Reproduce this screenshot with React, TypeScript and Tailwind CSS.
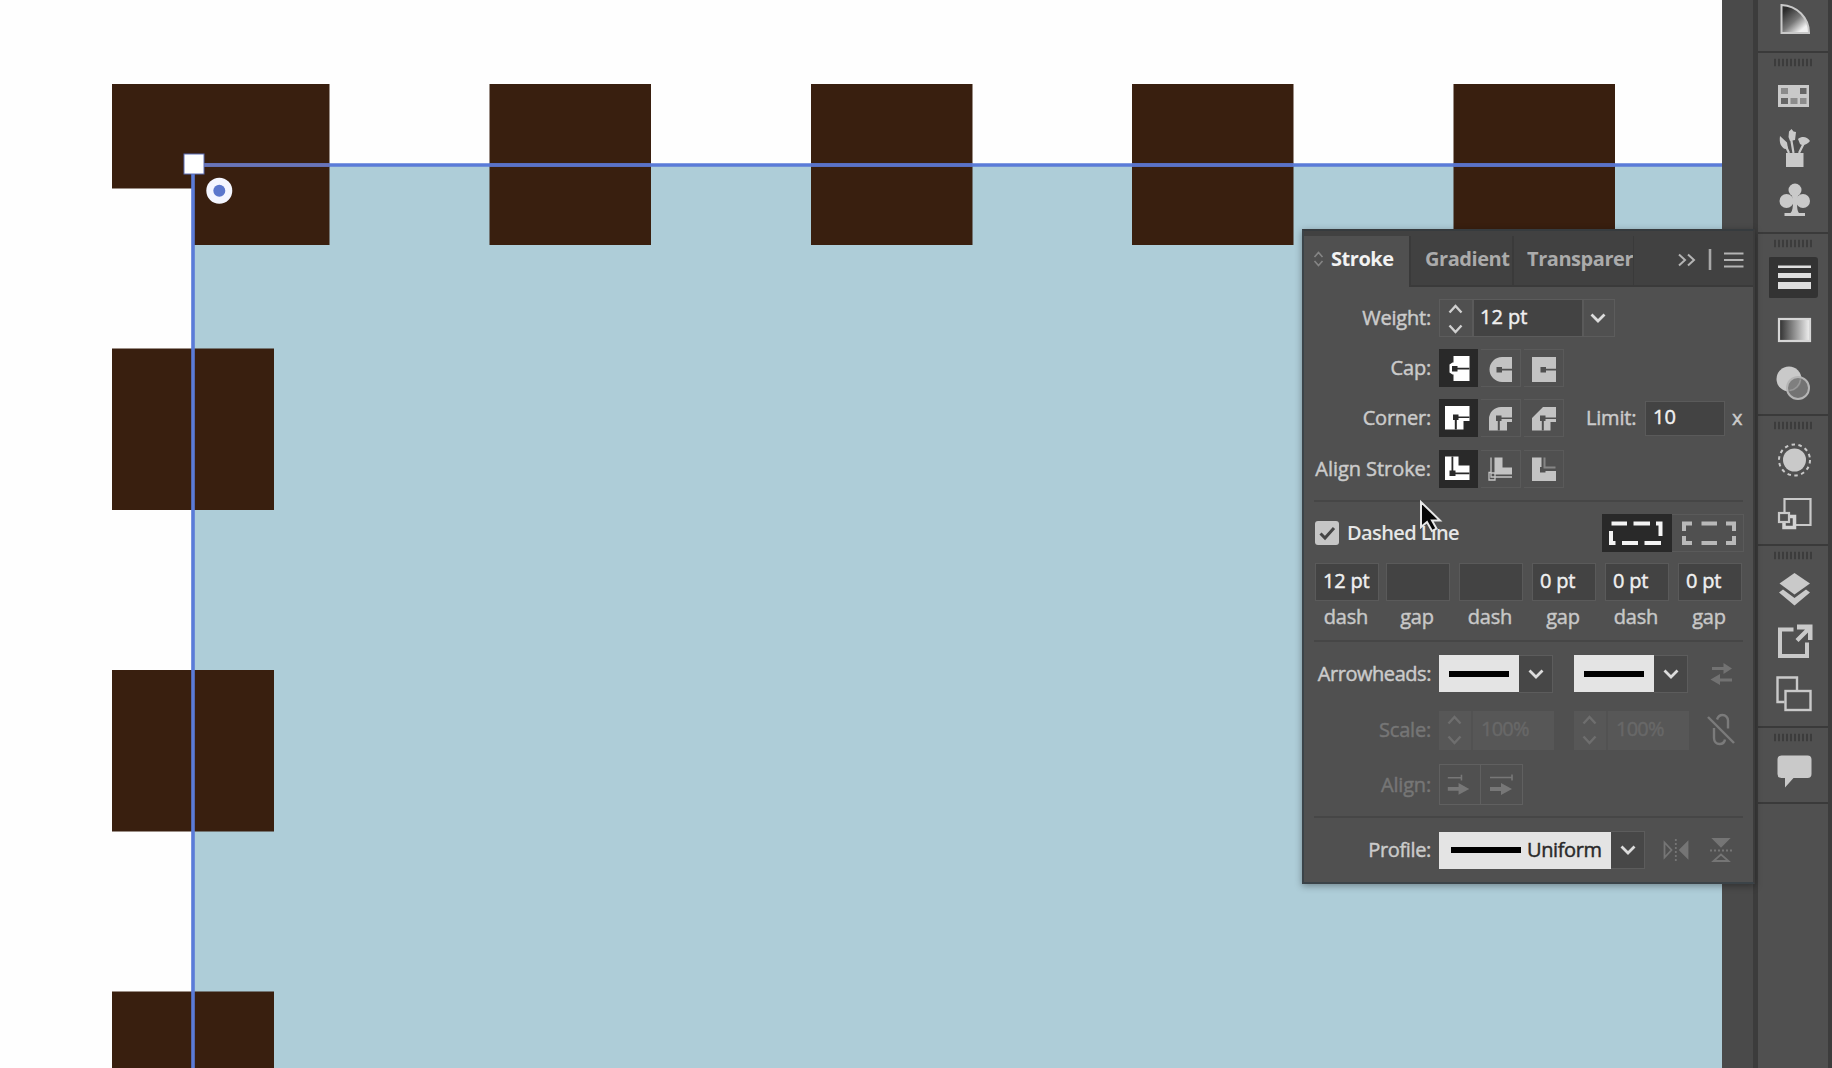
import type { ReactNode } from 'react'
import clsx from 'clsx'

const FONT = "font-['Open_Sans','Noto_Sans',sans-serif]"

function Artwork() {
  const top = [489.5, 811, 1132, 1453.5]
  const left = [348.5, 670, 991.5]
  return (
    <svg className="block h-[1068px] w-[1722px] shrink-0" viewBox="0 0 1722 1068">
      <rect width="1722" height="1068" fill="#fefefe" />
      <rect x="193" y="165" width="1529" height="903" fill="#aecdd8" />
      <g fill="#391f0f">
        <path d="M112 84H329.500V245H193V188.500H112Z" />
        {top.map((x) => (
          <rect key={x} x={x} y="84" width="161.5" height="161" />
        ))}
        {left.map((y) => (
          <rect key={y} x="112" y={y} width="162" height="161.5" />
        ))}
      </g>
      <path d="M1722 165H193V1068" fill="none" stroke="#5a7bd8" strokeWidth="3.6" />
      <g stroke="#6a74b8" strokeWidth="3.6">
        <path d="M194 165H329" />
        {top.map((x) => (
          <path key={x} d={`M${x} 165h161`} stroke="#5a72c8" />
        ))}
      </g>
      <rect x="184" y="154" width="20" height="20" fill="#fff" stroke="#5a6cb4" strokeWidth="1" />
      <circle cx="219.3" cy="190.7" r="13" fill="#f4f6ff" />
      <circle cx="219.3" cy="190.7" r="6" fill="#5b77cc" />
    </svg>
  )
}

/* ---------- small glyphs ---------- */

function Stepper({ color = '#d0d0d0' }: { color?: string }) {
  return (
    <svg className="h-[38px] w-8 shrink-0" viewBox="0 0 32 38" fill="none" stroke={color} strokeWidth="2.4">
      <path d="M9.500 12.500L15.500 6l6 6.500M9.500 25.500l6 6.500 6-6.500" />
    </svg>
  )
}

function Chevron() {
  return (
    <svg className="h-4 w-4" viewBox="0 0 16 16" fill="none" stroke="#dcdcdc" strokeWidth="2.8">
      <path d="M1.5 4.5L8 11l6.5-6.5" />
    </svg>
  )
}

function DropButton({ className }: { className?: string }) {
  return (
    <div className={clsx('flex h-[38px] w-[34px] items-center justify-center border border-[#5c5c5c] bg-[#474747]', className)}>
      <Chevron />
    </div>
  )
}

function IconButton({ active, children }: { active?: boolean; children: ReactNode }) {
  return (
    <div
      className={clsx(
        'h-[38px]',
        active ? 'w-[39px] bg-[#292929] text-white' : 'ml-[3px] w-10 border border-l-0 border-[#5a5a5a] text-[#c3c3c3]',
      )}
    >
      <svg className="block h-9 w-[38px]" viewBox="0 0 38 36" fill="currentColor">
        {children}
      </svg>
    </div>
  )
}

function Label({ children, dim, tracking = 'tracking-[-0.2px]' }: { children: ReactNode; dim?: boolean; tracking?: string }) {
  return (
    <div
      className={clsx(
        'mr-2 w-[127px] shrink-0 text-right text-[20px] leading-none whitespace-nowrap',
        tracking,
        dim ? 'text-[#767676]' : 'text-[#cbcbcb]',
      )}
    >
      {children}
    </div>
  )
}

function Row({ className, children }: { className?: string; children: ReactNode }) {
  return <div className={clsx('flex items-center', className)}>{children}</div>
}

function Divider({ className }: { className?: string }) {
  return <div className={clsx('mr-[10px] ml-[10px] h-0.5 bg-[#464646]', className)} />
}

/* ---------- stroke panel ---------- */

function PanelTabs() {
  return (
    <div className="flex h-[56px] bg-[#414141] pt-[5px] text-[20px] font-bold tracking-[-0.45px] text-[#ababab] [-webkit-text-stroke:0]">
      <div className="flex w-[105px] items-center bg-[#505050] pb-1.5 text-[#f2f2f2]">
        <svg className="mr-[7px] ml-[9px] h-4 w-[11px] shrink-0" viewBox="0 0 11 16" fill="none" stroke="#858585" strokeWidth="1.6">
          <path d="M1.5 6L5.5 1.5 9.5 6M1.5 10l4 4.500 4-4.500" />
        </svg>
        Stroke
      </div>
      <div className="flex w-[103px] items-center border-b-2 border-l-2 border-[#3a3a3a] pb-1 pl-[14px]">Gradient</div>
      <div className="flex w-[121px] items-center border-b-2 border-l-2 border-[#3a3a3a] pb-1 pl-[13px]">Transparer</div>
      <div className="flex grow items-center border-b-2 border-l border-[#3a3a3a] pb-1">
        <svg className="ml-[44px] h-6 w-[66px]" viewBox="0 0 66 24" fill="none" stroke="#b4b4b4" strokeWidth="2">
          <path d="M1 7.500l6 5.500-6 5.500M10 7.500l6 5.500-6 5.500" />
          <path d="M32 2v21" stroke="#a8a8a8" strokeWidth="2.600" />
          <path d="M46 6.500h19.500M46 13h19.500M46 19.500h19.500" />
        </svg>
      </div>
    </div>
  )
}

function DashField({ value, name, className }: { value: string; name: string; className?: string }) {
  return (
    <div className={clsx('w-[64px] shrink-0', className)}>
      <div className="flex h-[38px] items-center border border-[#5a5a5a] bg-[#434343] pb-[2px] pl-[7px] text-[20px] tracking-[-0.2px] whitespace-nowrap text-[#f0f0f0]">
        {value}
      </div>
      <div className="flex h-8 items-center justify-center pr-[2px] text-[20px] tracking-[-0.2px] text-[#c8c8c8]">{name}</div>
    </div>
  )
}

function ArrowPicker({ className }: { className?: string }) {
  return (
    <div className={clsx('flex', className)}>
      <div className="flex h-[37px] w-[80px] items-center justify-center bg-[#e4e4e4]">
        <div className="h-[6px] w-[60px] bg-black" />
      </div>
      <DropButton className="border-l-0" />
    </div>
  )
}

function ScaleField({ className }: { className?: string }) {
  return (
    <div className={clsx('flex h-[39px] w-[115px] items-center bg-[#575757] text-[20px] tracking-[-0.8px] text-[#686868]', className)}>
      <Stepper color="#6e6e6e" />
      <div className="flex h-full items-center border-l-2 border-[#525252] pb-[2px] pl-[8px]">100%</div>
    </div>
  )
}

function StrokePanel() {
  return (
    <div className="absolute top-[229px] left-[1302px] h-[655px] w-[453px] border-2 border-[#3b4348] border-t-[#363b3e] border-r-[#3c3c3c] bg-[#505050] shadow-[0_2px_7px_rgba(0,0,0,0.35)] [-webkit-text-stroke:0.45px]">
      <PanelTabs />

      <Row className="mt-3 h-[38px]">
        <Label>Weight:</Label>
        <div className="flex h-[38px] border border-[#5c5c5c]">
          <Stepper />
          <div className="flex w-[110px] items-center border-l-2 border-[#5a5a5a] bg-[#434343] pb-[2px] pl-[6px] text-[20px] text-[#f0f0f0]">12 pt</div>
          <div className="flex w-8 items-center justify-center border-l-2 border-[#5a5a5a] pr-[2px]">
            <Chevron />
          </div>
        </div>
      </Row>

      <Row className="mt-3 h-[38px]">
        <Label>Cap:</Label>
        <IconButton active>
          <path d="M14.500 7h16v25h-16zM10.500 15.500l3-2h3v12h-3l-3-2z" />
          <path d="M13 17h5.500v1.800h12v1.600h-12v2.100H13z" fill="#292929" />
        </IconButton>
        <IconButton>
          <path d="M31 7v25H21a12.500 12.500 0 010-25z" />
          <path d="M15.500 17h5.500v1.800h10v1.600H21v2.100h-5.500z" fill="#505050" />
        </IconButton>
        <IconButton>
          <path d="M8 7h24v25H8z" />
          <path d="M16.500 17H22v1.800h10v1.600H22v2.100h-5.500z" fill="#505050" />
        </IconButton>
      </Row>

      <Row className="mt-3 h-[38px]">
        <Label>Corner:</Label>
        <IconButton active>
          <path d="M6 7h24.500v15h-6v8.500H6z" />
          <path d="M14 15.500h5.500v2h11v1.600h-11v2h-1.700v9.500h-2v-9.500H14z" fill="#292929" />
        </IconButton>
        <IconButton>
          <path d="M8 30.500V19A12 12 0 0120 7h11v15h-5v8.500z" />
          <path d="M15 15.500h5.500v2H31v1.600H20.500v2h-1.700v9.500h-2v-9.500H15z" fill="#505050" />
        </IconButton>
        <IconButton>
          <path d="M8 30.500V18L19 7h13v15h-5.500v8.500z" />
          <path d="M16 15.500h5.500v2H32v1.600H21.500v2h-1.700v9.500h-2v-9.500H16z" fill="#505050" />
        </IconButton>
        <div className="ml-[22px] w-[51px] shrink-0 text-[20px] leading-none tracking-[-0.2px] text-[#cbcbcb]">Limit:</div>
        <div className="ml-[8px] flex h-[35px] w-[80px] shrink-0 items-center border border-[#5a5a5a] bg-[#434343] pb-[2px] pl-[7px] text-[20px] text-[#f0f0f0]">10</div>
        <div className="ml-[7px] text-[20px] leading-none text-[#cbcbcb]">x</div>
      </Row>

      <Row className="mt-[13px] h-[38px]">
        <Label tracking="tracking-[-0.05px]">Align Stroke:</Label>
        <IconButton active>
          <path d="M6 6.500h13.500v9h11V30H6z" />
          <path d="M12.500 6.500h1.800V20.500h2.200v2h14v1.800h-14v1.700H10.500v-5.500h2z" fill="#292929" />
        </IconButton>
        <IconButton>
          <path d="M13.500 6.500h8v10H31v7H13.500z" />
          <path d="M10 6.500v15H8V29h6v-3h17M10 22h4v4h-4z" fill="none" stroke="currentColor" strokeWidth="1.300" />
        </IconButton>
        <IconButton>
          <path d="M8 6.500h9.500V16H16v5.500h5.500V20H32v10H8z" />
          <path d="M19.500 6.500h2v9h10v2h-12z" fill="#858585" />
        </IconButton>
      </Row>

      <Divider className="mt-3" />

      <Row className="mt-3 h-[38px]">
        <div className="ml-[11px] flex h-6 w-6 shrink-0 items-center justify-center rounded-[3px] bg-[#c6c6c6]">
          <svg className="h-5 w-5" viewBox="0 0 20 20" fill="none" stroke="#454545" strokeWidth="3">
            <path d="M3.500 10.500l4.500 4.500L17 5" />
          </svg>
        </div>
        <div className="ml-[8px] w-[255px] shrink-0 text-[20px] leading-none font-semibold tracking-[-0.6px] text-[#e6e6e6] [-webkit-text-stroke:0]">
          Dashed Line
        </div>
        <div className="h-[38px] w-[70px] shrink-0 bg-[#292929]">
          <svg className="h-[38px] w-[70px]" viewBox="0 0 70 38" fill="none" stroke="#f4f4f4" strokeWidth="4">
            <path d="M9.500 9.500H25M31.500 9.500H48M54 9.500h4.500v12.500M9 17v12h4.500M20 29h16M42.500 29H59" />
          </svg>
        </div>
        <div className="h-[38px] w-[72px] shrink-0 border border-l-0 border-[#5a5a5a]">
          <svg className="h-9 w-[70px]" viewBox="0 0 70 36" fill="none" stroke="#b9b9b9" strokeWidth="4">
            <path d="M20 8.500h-8V16M29.500 8.500H45M54 8.500h8V16M12 21v7h8M29.500 28H45M54 28h8v-7" />
          </svg>
        </div>
      </Row>

      <div className="mt-[11px] flex">
        <DashField className="ml-[11px]" value="12 pt" name="dash" />
        <DashField className="ml-[7px]" value="" name="gap" />
        <DashField className="ml-[9px]" value="" name="dash" />
        <DashField className="ml-[9px]" value="0 pt" name="gap" />
        <DashField className="ml-[9px]" value="0 pt" name="dash" />
        <DashField className="ml-[9px]" value="0 pt" name="gap" />
      </div>

      <Divider className="mt-[7px]" />

      <Row className="mt-[13px] h-[38px]">
        <Label tracking="tracking-[-0.45px]">Arrowheads:</Label>
        <ArrowPicker />
        <ArrowPicker className="ml-[21px]" />
        <svg className="ml-[22px] h-6 w-6" viewBox="0 0 24 24" fill="#727272">
          <path d="M2 5h11.500V1l8.500 5.500-8.500 5.500V8H2zM22 16.500H10V12L.5 17.500 10 23v-3.500h12z" />
        </svg>
      </Row>

      <Row className="mt-[17px] h-[40px]">
        <Label dim>Scale:</Label>
        <ScaleField />
        <ScaleField className="ml-[20px]" />
        <svg className="ml-[16px] h-[34px] w-[30px]" viewBox="0 0 30 34" fill="none" stroke="#7b7b7b" strokeWidth="2.400">
          <path d="M3 4l26 26" />
          <path d="M12 6.500c1-3 3-4.500 5.500-4.500 3 0 5.500 2.500 5.500 5.500v8M9 15v10c0 3.500 2.500 6 5.500 6 3 0 5-1.500 5.500-4.500" />
        </svg>
      </Row>

      <Row className="mt-[14px] h-[41px]">
        <Label dim>Align:</Label>
        <div className="flex border border-[#606060]">
          <svg className="h-[39px] w-[41px] border-r border-[#606060]" viewBox="0 0 41 39" fill="#777">
            <path d="M8 12.500h14M22 9.500v6" stroke="#777" strokeWidth="1.600" />
            <path d="M8 22h11v-4l11 6-11 6v-4H8z" />
          </svg>
          <svg className="h-[39px] w-[41px]" viewBox="0 0 41 39" fill="#777">
            <path d="M9 12.500h22M31 9.500v6" stroke="#777" strokeWidth="1.600" />
            <path d="M9 22h11v-4l11 6-11 6v-4H9z" />
          </svg>
        </div>
      </Row>

      <Divider className="mt-[11px]" />

      <Row className="mt-[13px] h-[38px]">
        <Label tracking="tracking-[-0.35px]">Profile:</Label>
        <div className="flex h-[37px] w-[172px] items-center bg-[#e4e4e4] pl-3 text-[20px] tracking-[-0.4px] text-[#2a2a2a]">
          <div className="mr-[6px] h-[6px] w-[70px] shrink-0 bg-black" />
          Uniform
        </div>
        <DropButton className="border-l-0" />
        <svg className="ml-[18px] h-6 w-[26px]" viewBox="0 0 26 24" fill="none" stroke="#757575" strokeWidth="1.800">
          <path d="M1.500 4.500v15L8.500 12z" />
          <path d="M24.500 4.500v15L17 12z" fill="#757575" />
          <path d="M12.800 1v22" strokeDasharray="2 2" />
        </svg>
        <svg className="ml-[20px] h-[26px] w-6" viewBox="0 0 24 26" fill="none" stroke="#757575" strokeWidth="1.800">
          <path d="M4.500 2h15L12 9.500z" fill="#757575" />
          <path d="M4.500 24h15L12 17.500z" />
          <path d="M1 13.500h22" strokeDasharray="2 2" />
        </svg>
      </Row>
    </div>
  )
}

/* ---------- icon dock ---------- */

function DockIcon({ children, className }: { children: ReactNode; className?: string }) {
  return (
    <svg className={clsx('ml-[11px] block h-[52px] w-[52px]', className)} viewBox="0 0 52 52" fill="#c9c9c9">
      {children}
    </svg>
  )
}

function DockGroup({ className, children }: { className: string; children: ReactNode }) {
  return (
    <div className={clsx('shrink-0 border-t-2 border-[#3a3a3a]', className)}>
      <svg className="ml-4 block h-[17px] w-[38px]" viewBox="0 0 38 17">
        <path d="M0 9.500h38" stroke="#3c3c3c" strokeWidth="7.500" strokeDasharray="2 2" />
      </svg>
      {children}
    </div>
  )
}

function Dock() {
  return (
    <div className="flex w-[79px] shrink-0 flex-col border-r-4 border-l-[5px] border-[#3c3c3c] bg-[#505050]">
      <div className="h-[51px] shrink-0 overflow-hidden">
        <DockIcon className="mt-[-7px]">
          <defs>
            <linearGradient id="wedge" x1="0" y1="0.300" x2="0.600" y2="1">
              <stop offset="0" stopColor="#2c2c2c" />
              <stop offset="0.550" stopColor="#777" />
              <stop offset="1" stopColor="#f0f0f0" />
            </linearGradient>
          </defs>
          <path d="M12.500 12v28H40C40 25 28 12.500 12.500 12z" fill="url(#wedge)" stroke="#c9c9c9" strokeWidth="2" />
        </DockIcon>
      </div>

      <DockGroup className="h-[181px]">
        <DockIcon>
          <path d="M9 15h31v22H9z" />
          <path d="M12 18h7v6h-7zM21.500 28h7v6h-7zM31 28h6.500v6H31z" fill="#8c8c8c" />
          <path d="M31 18h6.500v6H31zM12 28h7v6h-7z" fill="#666" />
        </DockIcon>
        <DockIcon>
          <path d="M17 31h17.500v14H17z" />
          <path d="M20 31l-5-11M24.500 31L22 16M30 31l6-12" stroke="#c9c9c9" strokeWidth="2.200" />
          <path d="M11 14l7 6.500 1 6-3 .5c-4-2-6-6-5-13zM20 9.500L22.500 7l2 2.500L27 10l-1 8-5 1-1.500-4zM29 17c4-3 9-2.500 12 2-3 4-8 5-10 3z" />
        </DockIcon>
        <DockIcon>
          <circle cx="26" cy="16" r="6.500" />
          <circle cx="17.500" cy="27" r="7" />
          <circle cx="34" cy="27" r="7" />
          <path d="M22 17h8l-2 10c0 7 .5 10 2 12h6v3H15.500v-3h6c2-2 2.500-6 2.500-12z" />
        </DockIcon>
      </DockGroup>

      <DockGroup className="h-[182px]">
        <DockIcon>
          <rect x="-1" y="6" width="50" height="41" rx="3" fill="#333" />
          <path d="M9 14.500h33v2.500H9zM9 22h33v5H9zM9 31h33v7H9z" fill="#dedede" />
        </DockIcon>
        <DockIcon>
          <defs>
            <linearGradient id="ramp">
              <stop offset="0" stopColor="#2e2e2e" />
              <stop offset="1" stopColor="#f2f2f2" />
            </linearGradient>
          </defs>
          <rect x="10" y="16" width="31" height="22" fill="url(#ramp)" stroke="#d6d6d6" strokeWidth="2.200" />
        </DockIcon>
        <DockIcon>
          <circle cx="20" cy="24" r="12.500" />
          <circle cx="29" cy="33" r="11" fill="#777" fillOpacity="0.900" stroke="#b5b5b5" strokeWidth="2" />
          <path d="M31.500 24.500a12.500 12.500 0 01-11 11" fill="none" stroke="#999" strokeWidth="1.500" />
        </DockIcon>
      </DockGroup>

      <DockGroup className="h-[130px]">
        <DockIcon>
          <circle cx="25.500" cy="27" r="11.500" />
          <circle cx="25.500" cy="27" r="15.500" fill="none" stroke="#c9c9c9" strokeWidth="2" strokeDasharray="3.500 3.460" />
        </DockIcon>
        <DockIcon>
          <path d="M15.500 27V14h26v26H27" fill="none" stroke="#c9c9c9" strokeWidth="2.200" />
          <path d="M15 38v4.500h10.500V31.500H21" fill="none" stroke="#d4d4d4" strokeWidth="3.500" />
          <rect x="10" y="28" width="10" height="9" fill="#505050" stroke="#c9c9c9" strokeWidth="2.200" />
        </DockIcon>
      </DockGroup>

      <DockGroup className="h-[182px]">
        <DockIcon>
          <path d="M25.500 10L41 20.500 25.500 31.500 10.500 20.500z" />
          <path d="M10 29.500l4-3 11.500 8.500L37 26.500l4 3-15.500 13z" />
        </DockIcon>
        <DockIcon>
          <path d="M24.500 14.500H11V41h27V27.500" fill="none" stroke="#c9c9c9" strokeWidth="4" />
          <path d="M28 9.500h15.500V25h-4.500v-7.500l-9.500 9.500-3-3 9.500-9.500h-8z" />
        </DockIcon>
        <DockIcon>
          <g fill="none" stroke="#c9c9c9" strokeWidth="2.400">
            <path d="M15.500 35H8.500V10.500H28V23" />
            <rect x="16.500" y="24" width="25" height="19" />
          </g>
        </DockIcon>
      </DockGroup>

      <DockGroup className="h-[76px]">
        <DockIcon>
          <path d="M12.500 10.500h26a4 4 0 014 4v14.500a4 4 0 01-4 4H24.500L16 42.500V33h-3.500a4 4 0 01-4-4V14.500a4 4 0 014-4z" />
        </DockIcon>
      </DockGroup>
      <div className="h-0.5 bg-[#3a3a3a]" />
    </div>
  )
}

export default function App() {
  return (
    <div className={clsx('relative flex h-[1068px] w-[1832px] overflow-hidden bg-[#4a4a4a]', FONT)}>
      <Artwork />
      <div className="w-[31px] shrink-0 bg-[#4a4a4a]" />
      <Dock />
      <StrokePanel />
      <svg className="absolute top-[499px] left-[1417px] h-[40px] w-[28px]" viewBox="0 0 28 40">
        <path d="M4 3v25l6-5 5 9 4.500-2.500-4.500-8H23z" fill="#050505" stroke="#e8e8e8" strokeWidth="2" />
      </svg>
    </div>
  )
}
